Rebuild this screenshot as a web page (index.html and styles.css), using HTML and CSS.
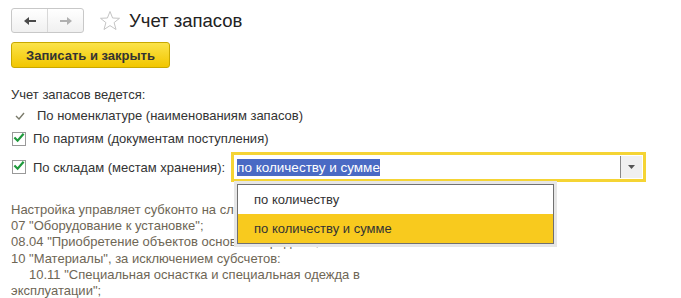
FILE: index.html
```
<!DOCTYPE html>
<html lang="ru">
<head>
    <meta charset="UTF-8">
    <title>Учет запасов</title>
    <link rel="stylesheet" href="styles.css">
</head>
<body>
    <div class="header">
        <div class="nav">
            <span class="nav-btn">
                <svg width="14" height="10" viewBox="0 0 14 10"><path d="M1 5 L6 1 L6 4 L13 4 L13 6 L6 6 L6 9 Z" fill="#4a4a4a"/></svg>
            </span>
            <span class="nav-btn">
                <svg width="14" height="10" viewBox="0 0 14 10"><path d="M13 5 L8 1 L8 4 L1 4 L1 6 L8 6 L8 9 Z" fill="#b0b0b0"/></svg>
            </span>
        </div>
        <svg class="star" width="22" height="22" viewBox="0 0 22 22"><path d="M11 1.5 L13.6 8 L20.5 8.3 L15.1 12.6 L17 19.5 L11 15.6 L5 19.5 L6.9 12.6 L1.5 8.3 L8.4 8 Z" fill="none" stroke="#c4c4c4" stroke-width="1"/></svg>
        <h1>Учет запасов</h1>
    </div>

    <button class="save">Записать и закрыть</button>

    <div class="group">
        <div class="caption">Учет запасов ведется:</div>
        <div class="row fixed">
            <svg class="tick" width="10" height="8" viewBox="0 0 10 8"><path d="M1 4 L4 7 L9 1" fill="none" stroke="#7a7a6a" stroke-width="1.4"/></svg>
            <span>По номенклатуре (наименованиям запасов)</span>
        </div>
        <div class="row">
            <span class="box"><svg width="13" height="11" viewBox="0 0 13 11"><path d="M1.5 5.5 L5 9 L11.5 1.5" fill="none" stroke="#1e9a3c" stroke-width="2.4"/></svg></span>
            <span>По партиям (документам поступления)</span>
        </div>
        <div class="row">
            <span class="box"><svg width="13" height="11" viewBox="0 0 13 11"><path d="M1.5 5.5 L5 9 L11.5 1.5" fill="none" stroke="#1e9a3c" stroke-width="2.4"/></svg></span>
            <span class="label">По складам (местам хранения):</span>
            <div class="combo">
                <div class="field">
                    <span class="value"><span class="sel">по количеству и сумме</span></span>
                    <span class="drop"><svg width="7" height="4" viewBox="0 0 7 4"><path d="M0 0 L7 0 L3.5 4 Z" fill="#555"/></svg></span>
                </div>
                <ul class="list">
                    <li>по количеству</li>
                    <li class="current">по количеству и сумме</li>
                </ul>
            </div>
        </div>
    </div>

    <div class="note">
        Настройка управляет субконто на следующих счетах:<br>
        07 "Оборудование к установке";<br>
        08.04 "Приобретение объектов основных средств";<br>
        10 "Материалы", за исключением субсчетов:<br>
        <span class="indent">10.11 "Специальная оснастка и специальная одежда в эксплуатации";</span>
    </div>
</body>
</html>
```

FILE: styles.css
```
body { margin: 0; padding: 8px 11px; font-family: "Liberation Sans", Arial, sans-serif; font-size: 13px; color: #333; background: #fff; width: 659px; }
.header { display: flex; align-items: center; height: 25px; }
.nav { display: flex; border: 1px solid #c8c8c8; border-radius: 3px; height: 23px; background: linear-gradient(#fff, #f0f0f0); }
.nav-btn { width: 35px; display: flex; align-items: center; justify-content: center; }
.nav-btn + .nav-btn { border-left: 1px solid #d8d8d8; }
.star { margin-left: 15px; margin-right: 8px; }
h1 { margin: 0; font-size: 18.5px; font-weight: normal; color: #222; }
.save { display: block; margin-top: 9px; width: 159px; height: 26px; border: 1px solid #c8a800; border-radius: 3px; background: linear-gradient(#fbe34a, #f2c600); font-family: inherit; font-size: 13px; font-weight: bold; color: #333; padding: 0; }
.group { margin-top: 19px; }
.caption { line-height: 16px; }
.row { display: flex; align-items: center; margin-top: 6px; }
.row.fixed { margin-top: 5px; line-height: 16px; }
.tick { margin-left: 4px; margin-right: 12px; }
.box { width: 12px; height: 12px; border: 1px solid #999; background: #fff; margin-left: 1px; margin-right: 7px; display: flex; align-items: flex-start; }
.box svg { margin-top: -1px; }
.row + .row { margin-top: 7px; }
.row:last-child { margin-top: 6px; }
.label { margin-right: 6px; }
.combo { position: relative; }
.field { display: flex; align-items: center; width: 409px; height: 24px; border: 3px solid #f5d434; background: #fff; }
.value { flex: 1; padding-left: 3px; }
.sel { background: #4a6ac4; color: #fff; padding: 1px 0; font-size: 13.5px; }
.drop { width: 21px; height: 22px; border-left: 1px solid #888; background: #f0f0f0; display: flex; align-items: center; justify-content: center; margin-right: 1px; }
.list { position: absolute; left: 6px; top: 32px; width: 315px; margin: 0; padding: 0; list-style: none; background: #fff; border: 1px solid #707070; box-shadow: 0 0 0 3px #e6e6e6; }
.list li { height: 29px; line-height: 29px; padding-left: 16px; }
.list li.current { background: #f8ca1e; }
.note { margin-top: 20px; width: 380px; color: #6e6655; font-size: 13px; line-height: 16.2px; }
.indent { padding-left: 18px; }
```
